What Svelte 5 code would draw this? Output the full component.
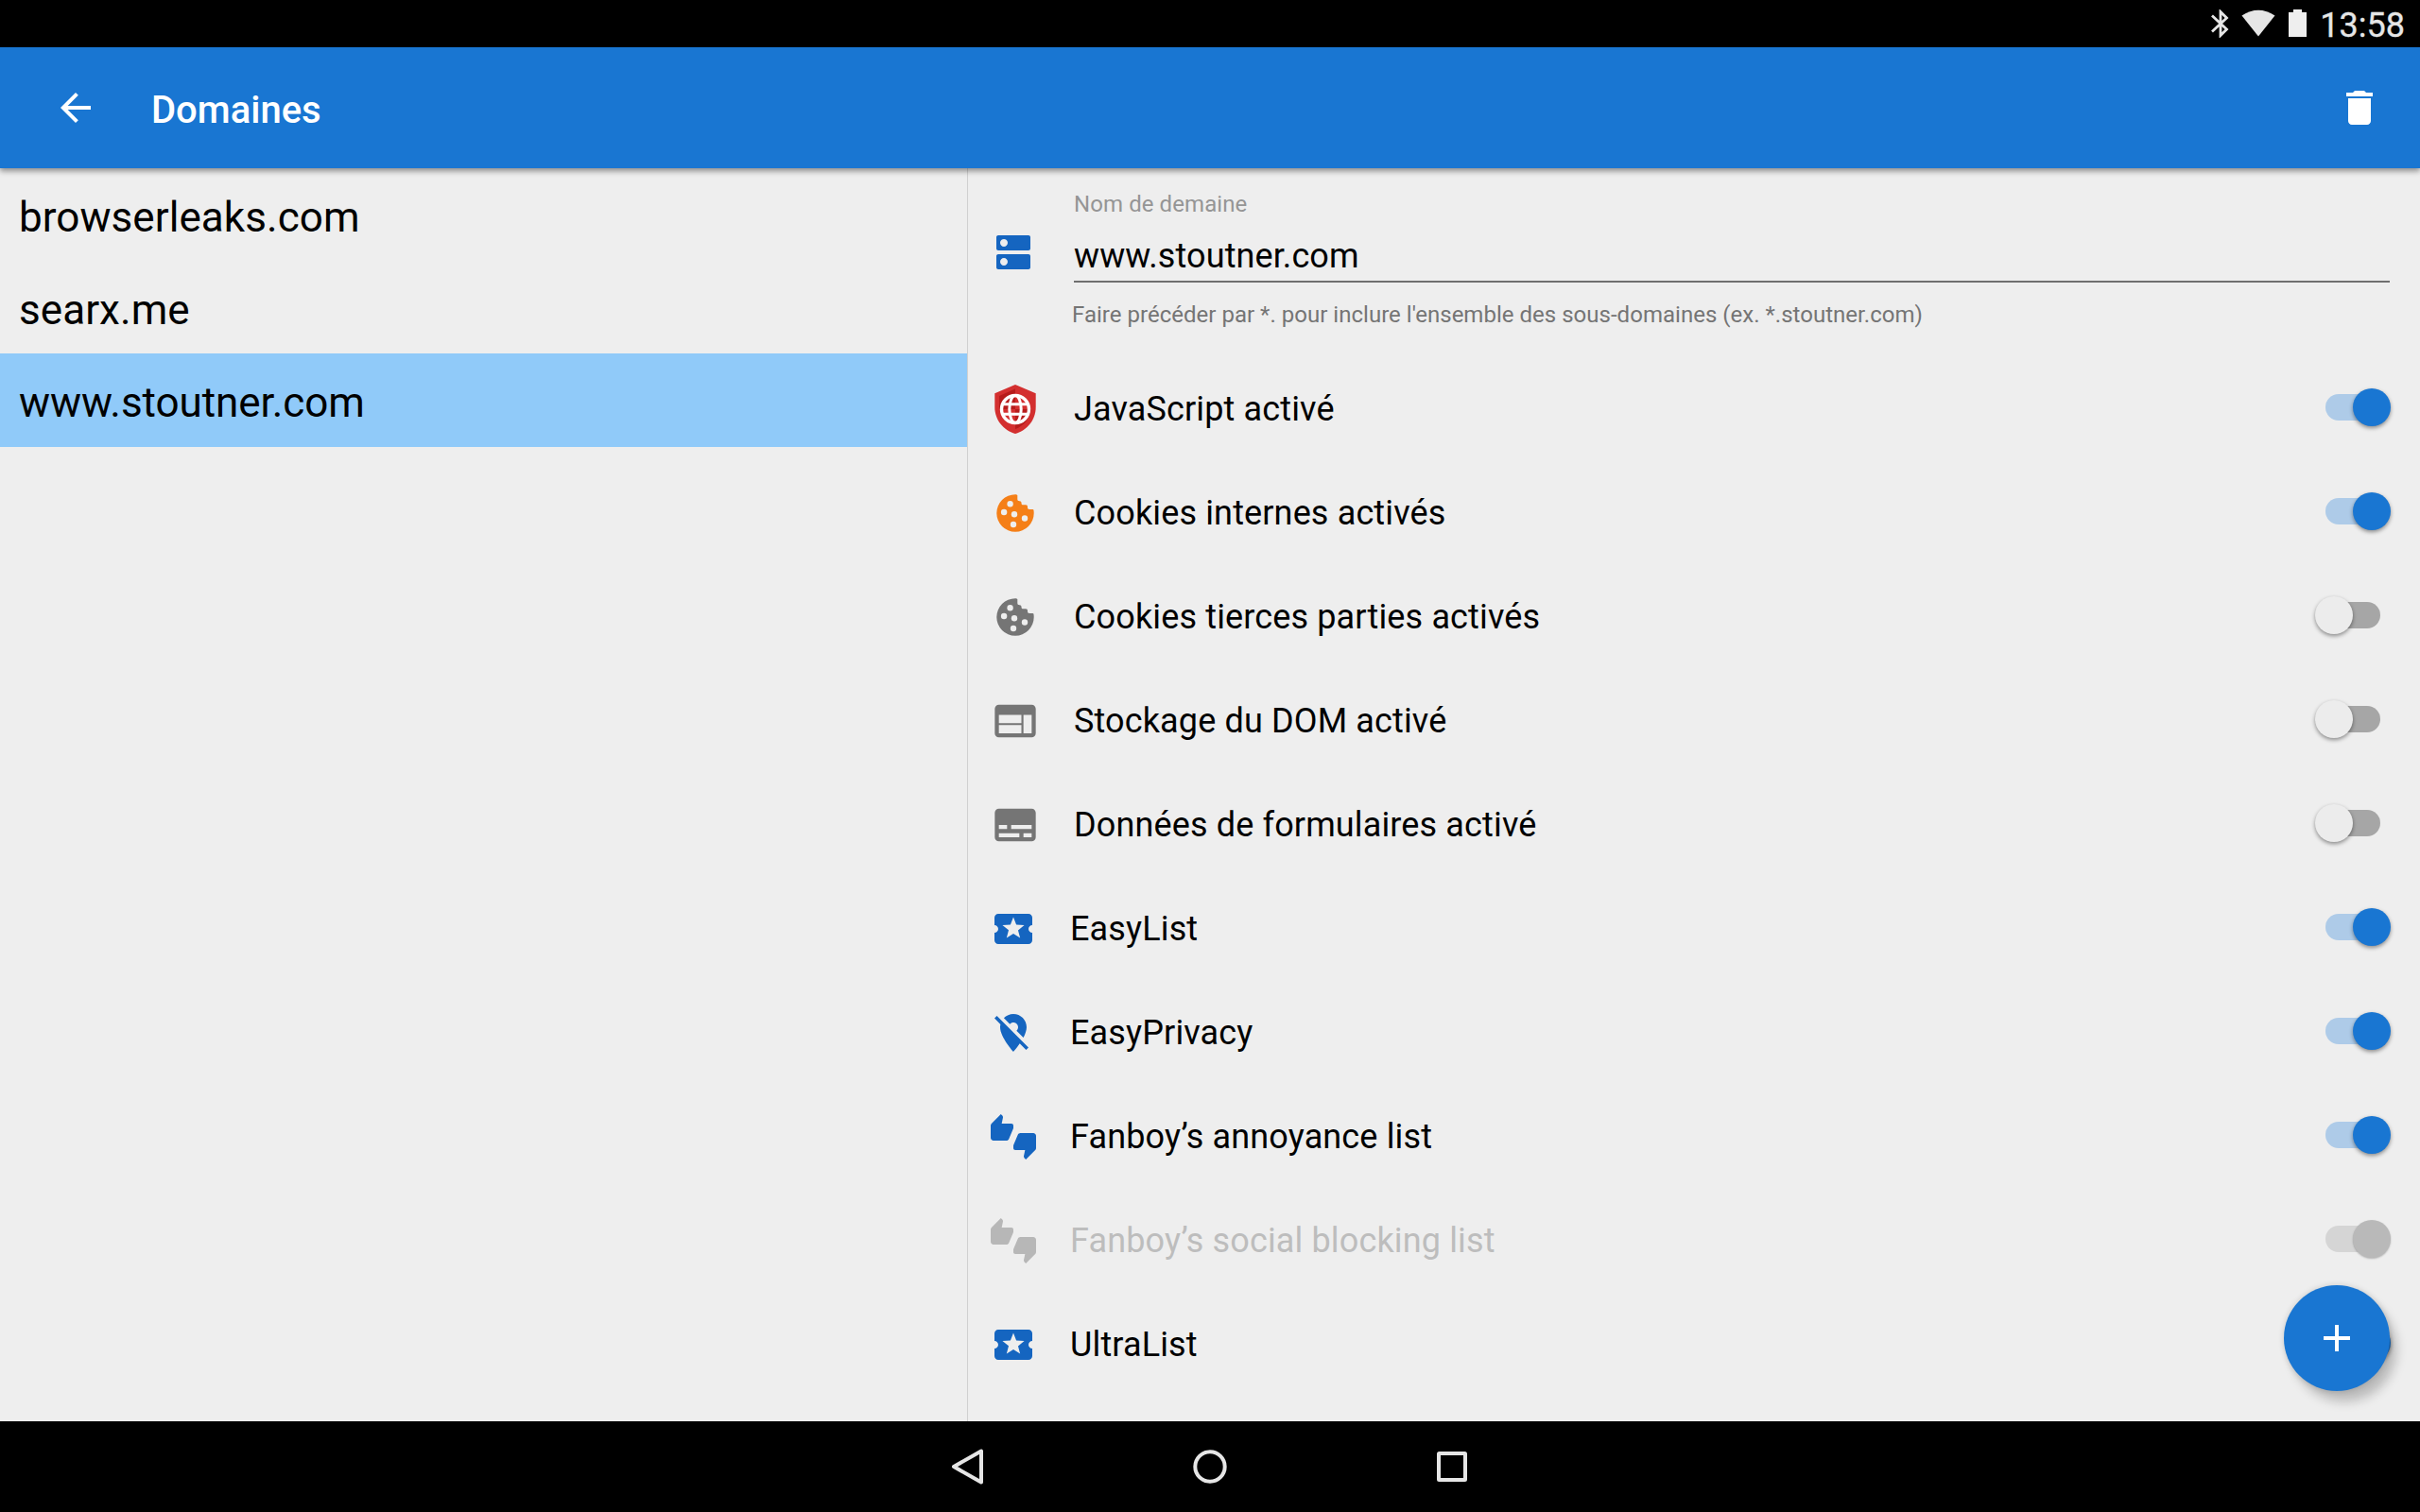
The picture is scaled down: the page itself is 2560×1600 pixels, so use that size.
<script>
  const paths = {
    back: 'M20 11H7.83l5.59-5.59L12 4l-8 8 8 8 1.41-1.41L7.83 13H20v-2z',
    trash: 'M6 19c0 1.1.9 2 2 2h8c1.1 0 2-.9 2-2V7H6v12zM19 4h-3.5l-1-1h-5l-1 1H5v2h14V4z',
    dns: 'M20 13H4c-.55 0-1 .45-1 1v6c0 .55.45 1 1 1h16c.55 0 1-.45 1-1v-6c0-.55-.45-1-1-1zM7 19c-1.1 0-2-.9-2-2s.9-2 2-2 2 .9 2 2-.9 2-2 2zM20 3H4c-.55 0-1 .45-1 1v6c0 .55.45 1 1 1h16c.55 0 1-.45 1-1V4c0-.55-.45-1-1-1zM7 9c-1.1 0-2-.9-2-2s.9-2 2-2 2 .9 2 2-.9 2-2 2z',
    web: 'M20 4H4c-1.1 0-1.99.9-1.99 2L2 18c0 1.1.9 2 2 2h16c1.1 0 2-.9 2-2V6c0-1.1-.9-2-2-2zm-5 14H4v-4h11v4zm0-5H4V9h11v4zm5 5h-4V9h4v9z',
    form: 'M20 4H4c-1.1 0-2 .9-2 2v12c0 1.1.9 2 2 2h16c1.1 0 2-.9 2-2V6c0-1.1-.9-2-2-2zM4 12h4v2H4v-2zm10 6H4v-2h10v2zm6 0h-4v-2h4v2zm0-4H10v-2h10v2z',
    ticket: 'M20 12c0-1.1.9-2 2-2V6c0-1.1-.9-2-2-2H4c-1.1 0-1.99.9-1.99 2v4c1.1 0 1.99.9 1.99 2s-.89 2-2 2v4c0 1.1.9 2 2 2h16c1.1 0 2-.9 2-2v-4c-1.1 0-2-.9-2-2zm-4.42 4.8L12 14.5l-3.58 2.3 1.08-4.12-3.29-2.69 4.24-.25L12 5.8l1.54 3.95 4.24.25-3.29 2.69 1.09 4.11z',
    location: 'M12 6.5c1.38 0 2.5 1.12 2.5 2.5 0 .74-.33 1.39-.83 1.85l3.63 3.63c.98-1.86 1.7-3.8 1.7-5.48 0-3.87-3.13-7-7-7-1.98 0-3.76.83-5.04 2.15l3.19 3.19c.46-.52 1.11-.84 1.85-.84zm4.37 9.6l-4.63-4.63-.11-.11L3.27 3 2 4.27l3.18 3.18C5.07 7.95 5 8.47 5 9c0 5.25 7 13 7 13s1.67-1.85 3.38-4.35L18.73 21 20 19.73l-3.63-3.63z',
    thumbs: 'M12 6c0-.55-.45-1-1-1H5.82l.66-3.18.02-.23c0-.31-.13-.59-.33-.8L5.38 0 .44 4.94C.17 5.21 0 5.59 0 6v6.5c0 .83.67 1.5 1.5 1.5h6.75c.62 0 1.15-.38 1.38-.91l2.26-5.29c.07-.17.11-.36.11-.55V6zm10.5 4h-6.75c-.62 0-1.15.38-1.38.91l-2.26 5.29c-.07.17-.11.36-.11.55V18c0 .55.45 1 1 1h5.18l-.66 3.18-.02.24c0 .31.13.59.33.8l.79.78 4.94-4.94c.27-.27.44-.65.44-1.06v-6.5c0-.83-.67-1.5-1.5-1.5z'
  };

  const domains = ['browserleaks.com', 'searx.me', 'www.stoutner.com'];
  let selected = $state('www.stoutner.com');

  let settings = $state([
    { label: 'JavaScript activé', icon: 'shield', tone: 'red', on: true, large: true },
    { label: 'Cookies internes activés', icon: 'cookie', tone: 'orange', on: true, large: true },
    { label: 'Cookies tierces parties activés', icon: 'cookie', tone: 'grey', on: false, large: true },
    { label: 'Stockage du DOM activé', icon: 'web', tone: 'grey', on: false, large: true },
    { label: 'Données de formulaires activé', icon: 'form', tone: 'grey', on: false, large: true },
    { label: 'EasyList', icon: 'ticket', tone: 'blue', on: true },
    { label: 'EasyPrivacy', icon: 'location', tone: 'blue', on: true },
    { label: 'Fanboy’s annoyance list', icon: 'thumbs', tone: 'blue', on: true },
    { label: 'Fanboy’s social blocking list', icon: 'thumbs', tone: 'faded', on: true, disabled: true },
    { label: 'UltraList', icon: 'ticket', tone: 'blue', on: true }
  ]);
</script>

{#snippet glyph(name)}
  <svg class="glyph" viewBox="0 0 24 24"><path d={paths[name]} /></svg>
{/snippet}

{#snippet shield()}
  <svg class="glyph" viewBox="0 0 52 52">
    <path fill="#d32f2f" d="M26 0 47.7 9.3V24c0 13-9 24.500-21.700 28C13.300 48.500 4.300 37 4.300 24V9.300z" />
    <path fill="#b71c1c" d="M26 4.600V26h16.600C41.300 36 35 44 26 47V26H9V12z" />
    <circle cx="26" cy="26" r="14.500" fill="none" stroke="#fff" stroke-width="3.400" />
    <ellipse cx="26" cy="26" rx="6.200" ry="14.500" fill="none" stroke="#fff" stroke-width="3" />
    <path d="M12.500 20.700h27M12.500 31.300h27" stroke="#fff" stroke-width="3" />
  </svg>
{/snippet}

{#snippet cookie()}
  <svg class="glyph" viewBox="0 0 52 52">
    <path d="M26 6.300c1 0 2 .1 2.300.8V11c0 1.500.6 2.200 2.200 2.200 1.500 0 2 .8 2 2.100 0 1.500.5 2 2 2h2.500c1.500 0 2 .7 2 2v.700c0 1.300.6 1.900 2 1.900h3.500c.9 0 1.200.8 1.200 4.100A19.700 19.700 0 1 1 26 6.300z" />
    <g fill="#eee">
      <circle cx="20.600" cy="16.200" r="3.200" /><circle cx="14.100" cy="25" r="3.200" /><circle cx="25" cy="27.200" r="3.200" />
      <circle cx="36" cy="31.500" r="3.200" /><circle cx="24" cy="38" r="3.200" />
    </g>
  </svg>
{/snippet}

<div class="screen">
  <div class="status">
    <svg class="bluetooth" viewBox="0 0 20 30"><path d="M2 6.500 17.500 21 11 27.500V2.500L17.500 9 2 23.500" /></svg>
    <svg class="wifi" viewBox="0 0 36 30"><path d="M.5 6.500Q18-5 35.500 6.500L18 28.500z" /></svg>
    <svg class="battery" viewBox="0 0 19 29"><path d="M5 0h9v3h5v26H0V3h5z" /></svg>
    <span class="time">13:58</span>
  </div>

  <header>
    <button class="icon" aria-label="Retour">{@render glyph('back')}</button>
    <h1>Domaines</h1>
    <button class="icon" aria-label="Supprimer">{@render glyph('trash')}</button>
  </header>

  <main>
    <nav class="domains">
      {#each domains as domain}
        <button class="domain" class:selected={domain === selected} onclick={() => (selected = domain)}>{domain}</button>
      {/each}
    </nav>

    <section class="details">
      <div class="name">
        <div class="icon blue">{@render glyph('dns')}</div>
        <div class="field">
          <span class="caption">Nom de demaine</span>
          <div class="value">www.stoutner.com</div>
          <span class="hint">Faire précéder par *. pour inclure l'ensemble des sous-domaines (ex. *.stoutner.com)</span>
        </div>
      </div>

      {#each settings as item}
        <div class="setting" class:disabled={item.disabled}>
          <div class="icon {item.tone}" class:large={item.large}>
            {#if item.icon === 'shield'}{@render shield()}
            {:else if item.icon === 'cookie'}{@render cookie()}
            {:else}{@render glyph(item.icon)}{/if}
          </div>
          <span class="label">{item.label}</span>
          <button
            class="switch"
            class:on={item.on}
            disabled={item.disabled}
            aria-label={item.label}
            onclick={() => (item.on = !item.on)}
          ><span class="thumb"></span></button>
        </div>
      {/each}
    </section>
  </main>

  <button class="fab" aria-label="Ajouter"><svg viewBox="0 0 28 28"><path d="M12 0h4v12h12v4H16v12h-4V16H0v-4h12z" /></svg></button>

  <footer>
    <svg viewBox="0 0 48 48"><path d="M38 7.500v33L9 24z" /></svg>
    <svg viewBox="0 0 48 48"><circle cx="24" cy="24" r="15.700" /></svg>
    <svg viewBox="0 0 48 48"><rect x="10" y="10" width="28" height="28" rx=".5" /></svg>
  </footer>
</div>

<style>
  :global(body) { margin: 0; }
  .screen {
    position: relative;
    display: flex;
    flex-direction: column;
    width: 2560px;
    height: 1600px;
    overflow: hidden;
    background: #eee;
    color: #000;
    font-family: Roboto, sans-serif;
  }
  button {
    border: 0;
    padding: 0;
    background: none;
    color: inherit;
    font: inherit;
    text-align: left;
  }
  svg { display: block; flex: none; }
  .glyph { width: 100%; height: 100%; fill: currentColor; }

  .status {
    display: flex;
    justify-content: flex-end;
    height: 50px;
    box-sizing: border-box;
    padding: 10px 16px 0 0;
    background: #000;
    color: #e6e6e6;
  }
  .bluetooth { width: 20px; height: 30px; margin-right: 13px; fill: none; stroke: #e6e6e6; stroke-width: 2.8; }
  .wifi { width: 36px; height: 30px; margin-right: 14px; fill: #e6e6e6; }
  .battery { width: 19px; height: 29px; margin-right: 14px; fill: #eee; }
  .time { margin-top: -4px; font-size: 36px; line-height: 42px; -webkit-text-stroke: .3px #e6e6e6; }

  header {
    position: relative;
    display: flex;
    align-items: center;
    height: 128px;
    flex: none;
    box-sizing: border-box;
    padding: 0 40px 0 56px;
    background: #1976d2;
    color: #fff;
    box-shadow: 0 3px 6px rgba(0, 0, 0, .42);
  }
  header h1 {
    flex: 1;
    margin: 6px 0 0 56px;
    font-size: 40px;
    font-weight: 500;
    line-height: 48px;
  }
  .icon { width: 48px; height: 48px; flex: none; }
  .icon.large { width: 52px; height: 52px; }
  .blue { color: #1565c0; }
  .orange { color: #f57f17; }
  .grey { color: #757575; }
  .faded { color: #b7b7b7; }

  main { display: flex; flex: 1; min-height: 0; }
  .domains {
    display: flex;
    flex-direction: column;
    width: 1023px;
    flex: none;
    border-right: 1px solid #d0d0d0;
  }
  .domain { height: 98px; padding: 6px 20px 0; font-size: 44px; line-height: 52px; letter-spacing: .06px; }
  .domain.selected { height: 99px; padding-top: 5px; background: #90caf9; letter-spacing: -.06px; }

  .details { flex: 1; padding: 0 32px 0 24px; }
  .name { display: flex; height: 200px; }
  .name .icon { margin-top: 65px; }
  .field { display: flex; flex-direction: column; flex: 1; margin-left: 40px; padding-top: 24px; }
  .caption { font-size: 24px; line-height: 28px; letter-spacing: .08px; color: #959595; }
  .value {
    height: 53px;
    margin-top: 14px;
    border-bottom: 2px solid #6f6f6f;
    font-size: 36px;
    line-height: 54px;
    letter-spacing: .1px;
  }
  .hint { margin: 20px 0 0 -2px; font-size: 24px; line-height: 28px; letter-spacing: .02px; color: #757575; }

  .setting { display: flex; align-items: center; height: 110px; }
  .label { flex: 1; margin-left: 36px; font-size: 36px; line-height: 42px; letter-spacing: .14px; }
  .disabled .label { color: #bdbdbd; }
  .switch {
    display: flex;
    align-items: center;
    width: 58px;
    height: 28px;
    margin: 0 10px 4px 0;
    border-radius: 14px;
    background: #a6a6a6;
  }
  .thumb {
    width: 40px;
    height: 40px;
    flex: none;
    margin-left: -11px;
    border-radius: 50%;
    background: #ececec;
    box-shadow: 0 2px 4px rgba(0, 0, 0, .42);
  }
  .on { background: #aecbe8; }
  .on .thumb { margin-left: 29px; background: #1976d2; }
  .disabled .switch { background: #d5d5d5; }
  .disabled .thumb { background: #b9b9b9; box-shadow: 0 1px 2px rgba(0, 0, 0, .25); }

  .fab {
    position: absolute;
    right: 32px;
    bottom: 128px;
    display: grid;
    place-items: center;
    width: 112px;
    height: 112px;
    border-radius: 50%;
    background: #1976d2;
    box-shadow: 8px 12px 12px -1px rgba(0, 0, 0, .22), 0 0 6px rgba(0, 0, 0, .16);
  }
  .fab svg { width: 28px; height: 28px; fill: #fff; }

  footer {
    display: flex;
    justify-content: center;
    align-items: center;
    gap: 208px;
    height: 96px;
    flex: none;
    background: #000;
  }
  footer svg { width: 48px; height: 48px; fill: none; stroke: #e6e6e6; stroke-width: 4; stroke-linejoin: round; }
</style>
